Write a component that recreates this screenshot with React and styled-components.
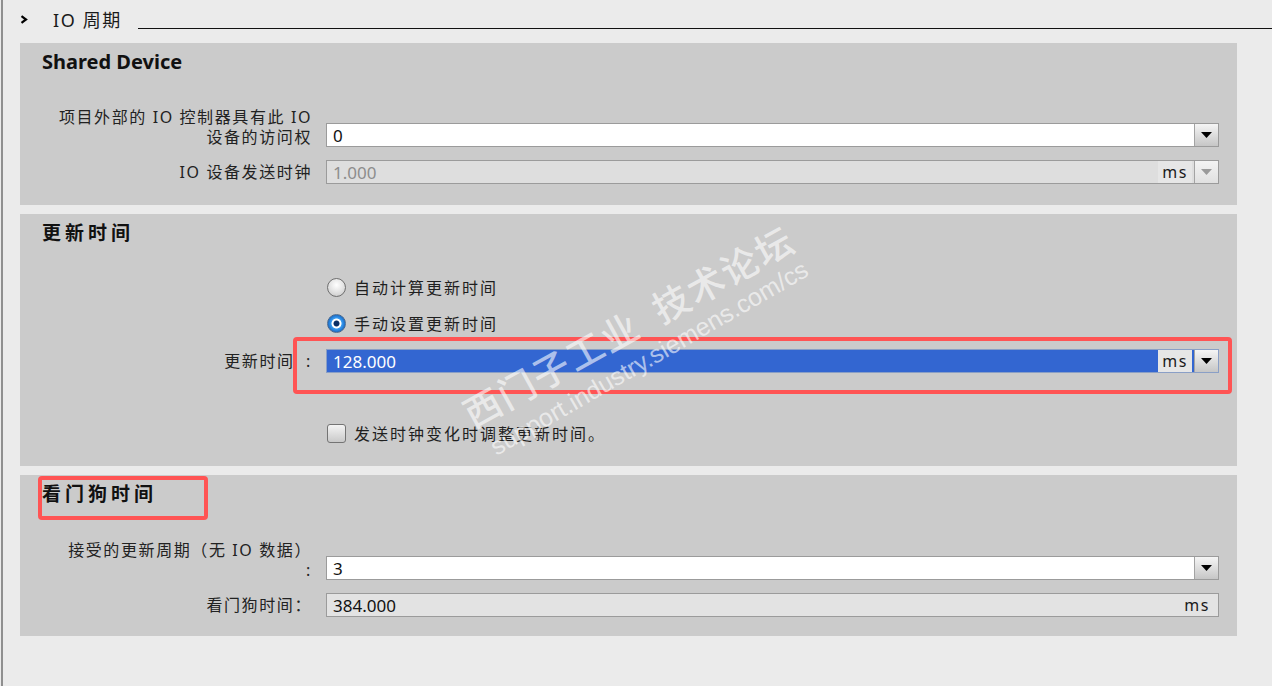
import React from "react";
import styled, { createGlobalStyle } from "styled-components";

const GlobalStyle = createGlobalStyle`
  html, body {
    margin: 0;
    padding: 0;
    background: #ebebeb;
  }
  body {
    font-family: "Noto Sans", "Noto Sans CJK SC", sans-serif;
    color: #1a1a1a;
  }
`;

const ArrowDown = ({ disabled }) => (
  <svg width="11" height="6" viewBox="0 0 11 6">
    <path d="M0 0 H11 L5.5 6 Z" fill={disabled ? "#9a9a9a" : "#000"} />
  </svg>
);

const Chevron = () => (
  <svg width="8" height="9" viewBox="0 0 8 9">
    <path d="M1.5 1.2 L6 4.5 L1.5 7.8" fill="none" stroke="#000" strokeWidth="2.2" />
  </svg>
);

const App = () => {
  return (
    <Page>
      <GlobalStyle />
      <Header>
        <Chevron />
        <HeaderTitle>IO 周期</HeaderTitle>
        <Rule />
      </Header>

      <Panels>
        <Panel $pb={21}>
          <Title $size={20}>Shared Device</Title>
          <Row $top={34} $align="end">
            <Label>
              项目外部的 IO 控制器具有此 IO
              <br />
              设备的访问权
            </Label>
            <Field>
              <Value>0</Value>
              <DropButton>
                <ArrowDown />
              </DropButton>
            </Field>
          </Row>
          <Row $top={13}>
            <Label>IO 设备发送时钟</Label>
            <Field $bg="#dedede">
              <Value $muted>1.000</Value>
              <Unit>ms</Unit>
              <DropButton $disabled>
                <ArrowDown disabled />
              </DropButton>
            </Field>
          </Row>
        </Panel>

        <Panel $pb={21}>
          <Title $spacing={4}>更新时间</Title>
          <Row $top={31}>
            <span />
            <Option>
              <Radio />
              <OptionText>自动计算更新时间</OptionText>
            </Option>
          </Row>
          <Row $top={12}>
            <span />
            <Option>
              <Radio $checked />
              <OptionText>手动设置更新时间</OptionText>
            </Option>
          </Row>
          <Row $top={14}>
            <Label>更新时间&nbsp;&nbsp;:</Label>
            <Field $bg="#3366d1" $border="#8a9fc6">
              <Value $selected>128.000</Value>
              <Unit>ms</Unit>
              <DropButton>
                <ArrowDown />
              </DropButton>
            </Field>
          </Row>
          <Row $top={48}>
            <span />
            <Option>
              <Checkbox />
              <OptionText>发送时钟变化时调整更新时间。</OptionText>
            </Option>
          </Row>
          <Highlight style={{ left: 273, top: 123, width: 939, height: 57 }} />
        </Panel>

        <Panel $pb={19}>
          <Title $spacing={4}>看门狗时间</Title>
          <Row $top={35} $align="end">
            <Label>
              接受的更新周期（无 IO 数据）
              <br />:
            </Label>
            <Field>
              <Value>3</Value>
              <DropButton>
                <ArrowDown />
              </DropButton>
            </Field>
          </Row>
          <Row $top={13}>
            <Label>看门狗时间：</Label>
            <Field $bg="#e3e3e3">
              <Value>384.000</Value>
              <Unit $plain>ms</Unit>
            </Field>
          </Row>
          <Highlight style={{ left: 18, top: 1, width: 170, height: 44 }} />
        </Panel>
      </Panels>

      <Watermark>
        <MarkCn style={{ left: 625, top: 325 }}>西门子工业&nbsp;&nbsp;技术论坛</MarkCn>
        <MarkUrl style={{ left: 646, top: 358 }}>support.industry.siemens.com/cs</MarkUrl>
      </Watermark>
    </Page>
  );
};

export default App;

const Page = styled.div`
  position: relative;
  box-sizing: border-box;
  min-height: 686px;
  margin-left: 1px;
  border-left: 2px solid #8f8f8f;
  padding: 0 35px 40px 17px;
  overflow: hidden;
`;

const Header = styled.div`
  display: flex;
  align-items: center;
  height: 38px;
  margin-right: -35px;
`;

const HeaderTitle = styled.span`
  margin-left: 25px;
  font-size: 18px;
  letter-spacing: 1.6px;
  color: #1a1a1a;
`;

const Rule = styled.div`
  flex: 1;
  height: 1px;
  background: #111;
  margin: 18px 0 0 16px;
`;

const Panels = styled.div`
  display: flex;
  flex-direction: column;
  gap: 9px;
  margin-top: 5px;
`;

const Panel = styled.section`
  position: relative;
  background: #cbcbcb;
  padding: 8px 18px ${(p) => p.$pb}px 22px;
`;

const Title = styled.h2`
  margin: 0;
  font-size: ${(p) => p.$size || 19}px;
  line-height: 22px;
  font-weight: 700;
  letter-spacing: ${(p) => p.$spacing || 0}px;
  color: #111;
`;

const Row = styled.div`
  display: grid;
  grid-template-columns: 270px 1fr;
  column-gap: 14px;
  align-items: ${(p) => p.$align || "center"};
  margin-top: ${(p) => p.$top}px;
`;

const Label = styled.div`
  text-align: right;
  font-size: 16px;
  line-height: 20px;
  letter-spacing: 1.6px;
  color: #222;
  white-space: nowrap;
`;

const Field = styled.div`
  display: flex;
  align-items: stretch;
  box-sizing: border-box;
  height: 24px;
  border: 1px solid ${(p) => p.$border || "#9b9b9b"};
  background: ${(p) => p.$bg || "#ffffff"};
`;

const Value = styled.div`
  flex: 1;
  display: flex;
  align-items: center;
  padding-left: 6px;
  font-size: 17px;
  color: ${(p) => (p.$selected ? "#ffffff" : p.$muted ? "#8d8d8d" : "#111")};
`;

const Unit = styled.div`
  display: flex;
  align-items: center;
  justify-content: center;
  width: 34px;
  margin-right: ${(p) => (p.$plain ? "4px" : "0")};
  background: ${(p) => (p.$plain ? "transparent" : "#e6e6e6")};
  font-size: 16px;
  letter-spacing: 1.5px;
  color: #1a1a1a;
`;

const DropButton = styled.div`
  display: flex;
  align-items: center;
  justify-content: center;
  width: 23px;
  margin-left: 2px;
  border-left: 1px solid #a3a3a3;
  background: ${(p) =>
    p.$disabled
      ? "linear-gradient(#f3f3f3, #e0e0e0)"
      : "linear-gradient(#f5f5f5, #c6c6c6)"};
`;

const Option = styled.label`
  display: flex;
  align-items: center;
  gap: 8px;
  height: 24px;
  margin-left: 1px;
`;

const OptionText = styled.span`
  font-size: 16px;
  letter-spacing: 2px;
  color: #1f1f1f;
`;

const Radio = styled.span`
  box-sizing: border-box;
  width: 19px;
  height: 19px;
  border-radius: 50%;
  border: 1.5px solid ${(p) => (p.$checked ? "#4a6a90" : "#6f6f6f")};
  background: ${(p) =>
    p.$checked
      ? "radial-gradient(circle, #0b2f66 0 2.6px, #ffffff 3.4px 4.6px, #3a9cf0 5.4px, #1466c4 9px)"
      : "radial-gradient(circle at 50% 35%, #ffffff 0, #e6e6e6 45%, #c4c4c4 100%)"};
`;

const Checkbox = styled.span`
  box-sizing: border-box;
  width: 19px;
  height: 19px;
  border-radius: 3px;
  border: 1.5px solid #747474;
  background: linear-gradient(#f4f4f4, #c9c9c9);
`;

const Highlight = styled.div`
  position: absolute;
  box-sizing: border-box;
  border: 4px solid #ff5454;
  border-radius: 4px;
  pointer-events: none;
`;

const Watermark = styled.div`
  position: absolute;
  inset: 0;
  pointer-events: none;
`;

const MarkCn = styled.div`
  position: absolute;
  transform: translate(-50%, -50%) rotate(-29deg);
  white-space: nowrap;
  font-family: "Noto Sans CJK SC", sans-serif;
  font-size: 37px;
  font-weight: 500;
  letter-spacing: 2px;
  color: rgba(255, 255, 255, 0.6);
`;

const MarkUrl = styled.div`
  position: absolute;
  transform: translate(-50%, -50%) rotate(-30deg);
  white-space: nowrap;
  font-family: "Liberation Sans", Arial, sans-serif;
  font-size: 25px;
  color: rgba(255, 255, 255, 0.6);
`;
